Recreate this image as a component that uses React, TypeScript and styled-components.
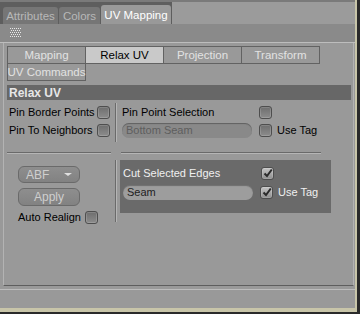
import styled, { createGlobalStyle } from "styled-components";

const GlobalStyle = createGlobalStyle`
  html, body {
    margin: 0;
    padding: 0;
    background: #999999;
  }
  * {
    box-sizing: border-box;
  }
`;

const Window = styled.div`
  width: 360px;
  height: 314px;
  background: #2a2a2a;
  padding: 0 3px 2px 0;
  font-family: "Liberation Sans", Arial, sans-serif;
  font-size: 11px;
  color: #000;
  overflow: hidden;
`;

const Inner = styled.div`
  width: 100%;
  height: 100%;
  background: #999999;
  border-right: 2px solid #c8c5a9;
  border-bottom: 4px solid #c8c5a9;
  display: flex;
  flex-direction: column;
`;

const TabBar = styled.div`
  height: 24px;
  display: flex;
  align-items: flex-end;
  padding-left: 3px;
  gap: 1px;
  background: linear-gradient(to right, #5e5e5e 0, #5e5e5e 172px, #9b9b9b 172px);
  border-top: 2px solid #7a7a7a;
`;

const Tab = styled.div<{ $active?: boolean; $w: number }>`
  width: ${({ $w }) => $w}px;
  height: ${({ $active }) => ($active ? 19 : 17)}px;
  border-radius: 3px 3px 0 0;
  background: ${({ $active }) => ($active ? "#999999" : "#767676")};
  color: ${({ $active }) => ($active ? "#ffffff" : "#b8b8b8")};
  font-size: 11.5px;
  display: flex;
  align-items: center;
  justify-content: center;
`;

const Toolbar = styled.div`
  height: 19px;
  background: #8a8a8a;
  display: flex;
  align-items: center;
  padding-left: 10px;
  border-bottom: 1px solid #bdbdbd;
`;

const Frame = styled.div`
  margin-left: 3px;
  width: 351px;
  height: 243px;
  border-left: 1px solid #b3b3b3;
  border-right: 1px solid #b3b3b3;
  border-bottom: 1px solid #5e5e5e;
  padding: 3px 0 0 3px;
  display: flex;
  flex-direction: column;
`;

const FrameUnder = styled.div`
  height: 1px;
  margin: 3px 0 0 0;
  background: #bdbdbd;
`;

const SubTabs = styled.div`
  display: grid;
  grid-template-columns: repeat(4, 78px);
  grid-auto-rows: 17px;
`;

const SubTab = styled.div<{ $active?: boolean }>`
  border: 1px solid #626262;
  margin: 0 -1px -1px 0;
  background: ${({ $active }) => ($active ? "#c9c9c9" : "#999999")};
  color: ${({ $active }) => ($active ? "#000" : "#e2e2e2")};
  font-size: 11.5px;
  white-space: nowrap;
  display: flex;
  align-items: center;
  justify-content: center;
`;

const Header = styled.div`
  margin-top: 5px;
  height: 15px;
  width: 344px;
  background: #676767;
  color: #e6e6e6;
  font-weight: bold;
  font-size: 12px;
  padding-left: 2px;
  display: flex;
  align-items: center;
`;

const UpperSection = styled.div`
  display: flex;
  padding-top: 3px;
  height: 45px;
`;

const Column = styled.div<{ $w: number; $pl: number }>`
  width: ${({ $w }) => $w}px;
  padding-left: ${({ $pl }) => $pl}px;
  display: flex;
  flex-direction: column;
`;

const Row = styled.div<{ $h?: number }>`
  height: ${({ $h }) => $h ?? 18}px;
  display: flex;
  align-items: center;
`;

const Label = styled.span<{ $w?: number; $light?: boolean }>`
  width: ${({ $w }) => ($w ? `${$w}px` : "auto")};
  color: ${({ $light }) => ($light ? "#f0f0f0" : "#000")};
  white-space: nowrap;
  font-size: 11px;
`;

const VSep = styled.div<{ $h: number }>`
  width: 2px;
  height: ${({ $h }) => $h}px;
  border-left: 1px solid #6a6a6a;
  border-right: 1px solid #b5b5b5;
  flex-shrink: 0;
`;

const HSepRow = styled.div`
  display: flex;
  margin-top: 7px;
  gap: 10px;
`;

const HSep = styled.div<{ $w: number }>`
  width: ${({ $w }) => $w}px;
  height: 2px;
  border-top: 1px solid #6a6a6a;
  border-bottom: 1px solid #b5b5b5;
`;

const Box = styled.div<{ $checked?: boolean }>`
  width: 13px;
  height: 13px;
  border-radius: 3px;
  border: 1px solid #4e4e4e;
  background: ${({ $checked }) =>
    $checked
      ? "linear-gradient(#c4c4c4, #8e8e8e)"
      : "linear-gradient(#6e6e6e, #8c8c8c)"};
  box-shadow: inset 0 0 0 1px rgba(255, 255, 255, 0.15);
  display: flex;
  align-items: center;
  justify-content: center;
  flex-shrink: 0;
`;

const Field = styled.div<{ $light?: boolean }>`
  width: 130px;
  height: 15px;
  border-radius: 7px;
  background: ${({ $light }) => ($light ? "#9d9d9d" : "#898989")};
  box-shadow: inset 0 1px 1px rgba(0, 0, 0, 0.3);
  color: ${({ $light }) => ($light ? "#222" : "#5e5e5e")};
  font-size: 11px;
  padding-left: 4px;
  display: flex;
  align-items: center;
  margin-right: 7px;
`;

const LowerSection = styled.div`
  display: flex;
  padding-top: 6px;
`;

const LeftTools = styled.div`
  width: 108px;
  padding: 6px 0 0 11px;
  display: flex;
  flex-direction: column;
`;

const PillButton = styled.div<{ $h: number; $mb: number }>`
  width: 62px;
  height: ${({ $h }) => $h}px;
  margin-bottom: ${({ $mb }) => $mb}px;
  border-radius: 6px;
  border: 1px solid #6a6a6a;
  background: linear-gradient(#8e8e8e, #828282);
  color: #cfcfcf;
  font-size: 12px;
  display: flex;
  align-items: center;
  justify-content: center;
  position: relative;
`;

const DropText = styled.span`
  position: absolute;
  left: 7px;
`;

const Caret = styled.span`
  position: absolute;
  right: 7px;
  top: 6px;
  width: 0;
  height: 0;
  border-left: 4px solid transparent;
  border-right: 4px solid transparent;
  border-top: 3px solid #e0e0e0;
`;

const DarkPanel = styled.div`
  margin-left: 3px;
  width: 211px;
  height: 53px;
  background: #6a6a6a;
  padding: 4px 0 0 3px;
  display: flex;
  flex-direction: column;
  gap: 2px;
`;

const Grip = () => (
  <svg width="11" height="10" viewBox="0 0 11 10">
    {Array.from({ length: 5 }).map((_, r) =>
      Array.from({ length: 6 }).map((__, c) => (
        <rect
          key={`${r}-${c}`}
          x={c * 2 + (r % 2)}
          y={r * 2}
          width="1"
          height="1"
          fill="#e8e8e8"
        />
      ))
    )}
  </svg>
);

const Check = ({ checked }: { checked?: boolean }) => (
  <Box $checked={checked}>
    {checked && (
      <svg width="10" height="10" viewBox="0 0 10 10">
        <path d="M1.5 5.5 L4 8 L8.8 1.5" fill="none" stroke="#2a2a2a" strokeWidth="2" />
      </svg>
    )}
  </Box>
);

const App = () => {
  return (
    <Window>
      <GlobalStyle />
      <Inner>
        <TabBar>
          <Tab $w={55}>Attributes</Tab>
          <Tab $w={41}>Colors</Tab>
          <Tab $w={70} $active>
            UV Mapping
          </Tab>
        </TabBar>
        <Toolbar>
          <Grip />
        </Toolbar>
        <Frame>
          <SubTabs>
            <SubTab>Mapping</SubTab>
            <SubTab $active>Relax UV</SubTab>
            <SubTab>Projection</SubTab>
            <SubTab>Transform</SubTab>
            <SubTab>UV Commands</SubTab>
          </SubTabs>
          <Header>Relax UV</Header>
          <UpperSection>
            <Column $w={108} $pl={2}>
              <Row>
                <Label $w={88}>Pin Border Points</Label>
                <Check />
              </Row>
              <Row>
                <Label $w={88}>Pin To Neighbors</Label>
                <Check />
              </Row>
            </Column>
            <VSep $h={39} />
            <Column $w={236} $pl={5}>
              <Row>
                <Label $w={137}>Pin Point Selection</Label>
                <Check />
              </Row>
              <Row>
                <Field>Bottom Seam</Field>
                <Check />
                <Label style={{ marginLeft: 5 }}>Use Tag</Label>
              </Row>
            </Column>
          </UpperSection>
          <HSepRow>
            <HSep $w={104} />
            <HSep $w={200} />
          </HSepRow>
          <LowerSection>
            <LeftTools>
              <PillButton $h={17} $mb={5}>
                <DropText>ABF</DropText>
                <Caret />
              </PillButton>
              <PillButton $h={18} $mb={4}>
                Apply
              </PillButton>
              <Row $h={14}>
                <Label $w={67}>Auto Realign</Label>
                <Check />
              </Row>
            </LeftTools>
            <VSep $h={62} />
            <DarkPanel>
              <Row $h={18}>
                <Label $w={138} $light>
                  Cut Selected Edges
                </Label>
                <Check checked />
              </Row>
              <Row $h={16}>
                <Field $light>Seam</Field>
                <Check checked />
                <Label $light style={{ marginLeft: 5 }}>
                  Use Tag
                </Label>
              </Row>
            </DarkPanel>
          </LowerSection>
        </Frame>
        <FrameUnder />
      </Inner>
    </Window>
  );
};

export default App;
